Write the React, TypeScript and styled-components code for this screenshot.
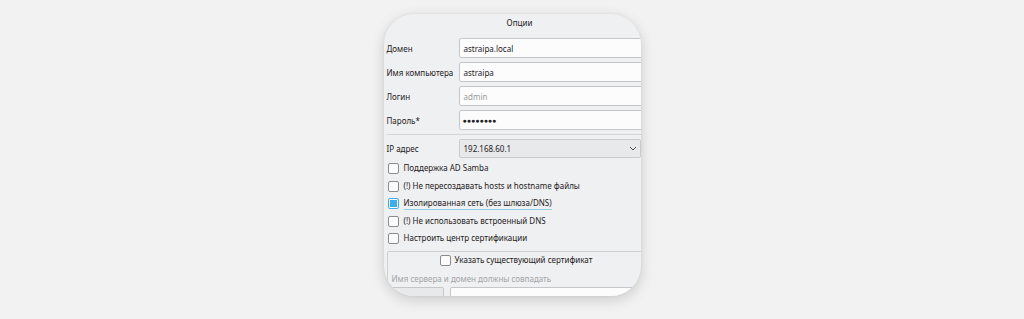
import React from 'react';
import styled, { createGlobalStyle } from 'styled-components';

const GlobalStyle = createGlobalStyle`
  html, body {
    margin: 0;
    padding: 0;
    background: #f2f2f2;
    font-family: "Noto Sans", "Open Sans", sans-serif;
  }
`;

type CheckOption = { label: string; checked?: boolean; focused?: boolean };

const options: CheckOption[] = [
  { label: 'Поддержка AD Samba' },
  { label: '(!) Не пересоздавать hosts и hostname файлы' },
  { label: 'Изолированная сеть (без шлюза/DNS)', checked: true, focused: true },
  { label: '(!) Не использовать встроенный DNS' },
  { label: 'Настроить центр сертификации' },
];

function CheckBox({ checked }: { checked?: boolean }) {
  return <Styled.Box $checked={checked}>{checked && <Styled.BoxFill />}</Styled.Box>;
}

function App() {
  return (
    <>
      <GlobalStyle />
      <Styled.Page>
        <Styled.Card>
          <Styled.Title>Опции</Styled.Title>
          <Styled.Fields>
            <Styled.Label>Домен</Styled.Label>
            <Styled.Input>astraipa.local</Styled.Input>
            <Styled.Label>Имя компьютера</Styled.Label>
            <Styled.Input>astraipa</Styled.Input>
            <Styled.Label>Логин</Styled.Label>
            <Styled.Input $placeholder>admin</Styled.Input>
            <Styled.Label>Пароль*</Styled.Label>
            <Styled.Input $password>●●●●●●●●</Styled.Input>
          </Styled.Fields>
          <Styled.Separator />
          <Styled.ComboRow>
            <Styled.Label>IP адрес</Styled.Label>
            <Styled.Combo>
              <span>192.168.60.1</span>
              <svg width="8" height="5" viewBox="0 0 8 5">
                <path d="M1 1l3 3 3-3" fill="none" stroke="#4d4d4d" strokeWidth="1" />
              </svg>
            </Styled.Combo>
          </Styled.ComboRow>
          <Styled.Checks>
            {options.map((o) => (
              <Styled.CheckRow key={o.label}>
                <CheckBox checked={o.checked} />
                <Styled.CheckText $focused={o.focused}>{o.label}</Styled.CheckText>
              </Styled.CheckRow>
            ))}
          </Styled.Checks>
          <Styled.Group>
            <Styled.GroupHead>
              <CheckBox />
              <Styled.CheckText>Указать существующий сертификат</Styled.CheckText>
            </Styled.GroupHead>
            <Styled.Hint>Имя сервера и домен должны совпадать</Styled.Hint>
            <Styled.BottomRow>
              <Styled.Button />
              <Styled.Input />
            </Styled.BottomRow>
          </Styled.Group>
        </Styled.Card>
      </Styled.Page>
    </>
  );
}

export default App;

const Page = styled.div`
  width: 1024px;
  height: 319px;
  display: flex;
  justify-content: center;
  padding-top: 14px;
  box-sizing: border-box;
  overflow: hidden;
`;

const Card = styled.div`
  width: 257px;
  height: 282px;
  border-radius: 30px;
  background: #eff0f1;
  box-shadow: 0 4px 14px rgba(0, 0, 0, 0.16), 0 0 3px rgba(0, 0, 0, 0.06);
  overflow: hidden;
  padding-left: 3px;
  box-sizing: border-box;
  font-size: 8px;
  color: #1e2022;
`;

const Title = styled.div`
  height: 18px;
  line-height: 18px;
  text-align: center;
  padding-left: 12px;
  margin-bottom: 6px;
`;

const Fields = styled.div`
  display: grid;
  grid-template-columns: 72px 200px;
  row-gap: 4px;
  align-items: center;
`;

const Label = styled.div`
  white-space: nowrap;
`;

const Input = styled.div<{ $placeholder?: boolean; $password?: boolean }>`
  height: 20px;
  box-sizing: border-box;
  background: #fcfcfc;
  border: 1px solid #c4c6c8;
  border-radius: 2px;
  padding-left: ${({ $password }) => ($password ? '3px' : '4px')};
  display: flex;
  align-items: center;
  color: ${({ $placeholder }) => ($placeholder ? '#9a9c9e' : '#1e2022')};
  font-size: ${({ $password }) => ($password ? '7px' : '8px')};
  flex: 1;
`;

const Separator = styled.div`
  height: 1px;
  width: 280px;
  background: #d4d5d7;
  margin: 4px 0 4px;
`;

const ComboRow = styled.div`
  display: grid;
  grid-template-columns: 72px 182px;
  align-items: center;
  height: 19px;
`;

const Combo = styled.div`
  height: 19px;
  box-sizing: border-box;
  border: 1px solid #c9cbcd;
  border-radius: 2px;
  background: #e8e9ea;
  display: flex;
  align-items: center;
  justify-content: space-between;
  padding: 0 3px 0 4px;
`;

const Checks = styled.div`
  display: flex;
  flex-direction: column;
  padding-top: 2px;
`;

const CheckRow = styled.div`
  height: 17.5px;
  display: flex;
  align-items: center;
  gap: 5px;
  padding-left: 1px;
`;

const Box = styled.div<{ $checked?: boolean }>`
  width: 11px;
  height: 11px;
  box-sizing: border-box;
  border: 1px solid ${({ $checked }) => ($checked ? '#3daee9' : '#8a8c8e')};
  border-radius: 2px;
  background: #fcfcfc;
  display: flex;
  align-items: center;
  justify-content: center;
  flex-shrink: 0;
`;

const BoxFill = styled.div`
  width: 7px;
  height: 7px;
  background: #3daee9;
`;

const CheckText = styled.span<{ $focused?: boolean }>`
  white-space: nowrap;
  border-bottom: 1px solid ${({ $focused }) => ($focused ? '#93cee9' : 'transparent')};
  line-height: 12px;
`;

const Group = styled.div`
  margin-top: 3px;
  width: 280px;
  border: 1px solid #cfd0d2;
  border-radius: 2px;
  display: flex;
  flex-direction: column;
  padding-left: 3px;
`;

const GroupHead = styled.div`
  height: 18px;
  display: flex;
  align-items: center;
  gap: 4px;
  padding-left: 49px;
`;

const Hint = styled.div`
  height: 17px;
  line-height: 17px;
  color: #a3a5a7;
  padding-left: 1px;
`;

const BottomRow = styled.div`
  display: flex;
  gap: 6px;
  margin-left: -3px;
`;

const Button = styled.div`
  width: 56px;
  height: 20px;
  box-sizing: border-box;
  border: 1px solid #c4c6c8;
  border-radius: 2px;
  background: #e8e9ea;
`;

const Styled = {
  Page,
  Card,
  Title,
  Fields,
  Label,
  Input,
  Separator,
  ComboRow,
  Combo,
  Checks,
  CheckRow,
  Box,
  BoxFill,
  CheckText,
  Group,
  GroupHead,
  Hint,
  BottomRow,
  Button,
};
